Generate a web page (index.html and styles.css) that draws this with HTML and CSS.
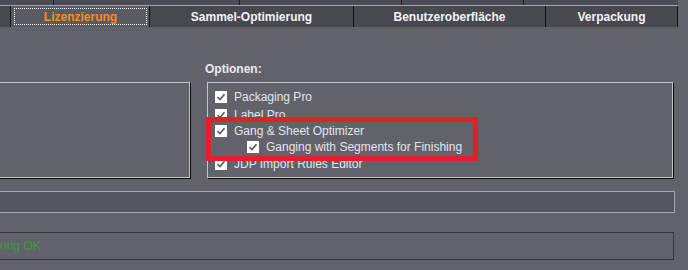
FILE: index.html
```html
<!DOCTYPE html>
<html lang="de">
<head>
    <meta charset="UTF-8">
    <title>Lizenzierung</title>
    <link rel="stylesheet" href="styles.css">
</head>
<body>
    <div class="top-strip">
        <span class="strip-cell" style="width: 54px"></span>
        <span class="strip-cell" style="width: 186px"></span>
        <span class="strip-cell" style="width: 162px"></span>
        <span class="strip-cell" style="width: 122px"></span>
    </div>
    <div class="tabs">
        <div class="tab tab-cut"></div>
        <div class="tab active"><span class="focus">Lizenzierung</span></div>
        <div class="tab tab-sammel">Sammel-Optimierung</div>
        <div class="tab tab-ui">Benutzeroberfläche</div>
        <div class="tab tab-pack">Verpackung</div>
    </div>

    <div class="content">
        <div class="columns">
            <div class="panel left-panel"></div>
            <div class="options">
                <div class="label">Optionen:</div>
                <div class="panel option-list">
                    <div class="row r1"><span class="check"><svg viewBox="0 0 12 12"><path d="M2.5 6.2 L5 8.6 L9.5 3.2"/></svg></span>Packaging Pro</div>
                    <div class="row r2"><span class="check"><svg viewBox="0 0 12 12"><path d="M2.5 6.2 L5 8.6 L9.5 3.2"/></svg></span>Label Pro</div>
                    <div class="row r3"><span class="check"><svg viewBox="0 0 12 12"><path d="M2.5 6.2 L5 8.6 L9.5 3.2"/></svg></span>Gang &amp; Sheet Optimizer</div>
                    <div class="row r4 sub"><span class="check"><svg viewBox="0 0 12 12"><path d="M2.5 6.2 L5 8.6 L9.5 3.2"/></svg></span>Ganging with Segments for Finishing</div>
                    <div class="row r5"><span class="check"><svg viewBox="0 0 12 12"><path d="M2.5 6.2 L5 8.6 L9.5 3.2"/></svg></span>JDP Import Rules Editor</div>
                    <div class="highlight"></div>
                </div>
            </div>
        </div>

        <div class="progress-bar"></div>
        <div class="status">Lizenzierung OK</div>
    </div>
</body>
</html>
```

FILE: styles.css
```css
body {
    margin: 0;
    width: 688px;
    height: 270px;
    overflow: hidden;
    background-color: #62626a;
    font-family: "Liberation Sans", Arial, sans-serif;
    font-size: 12px;
    color: #e4e4ec;
}

/* top row of the tab control, mostly hidden */
.top-strip {
    display: flex;
    height: 5px;
    width: 678px;
    background-color: #4c4c54;
}

.strip-cell {
    height: 5px;
    border-right: 1px solid #1c1c20;
    box-sizing: border-box;
}

.tabs {
    display: flex;
    height: 21px;
    border-top: 1px solid #a4a4ac;
    width: 678px;
    background-color: #48484f;
}

.tab {
    box-sizing: border-box;
    height: 21px;
    border-right: 1px solid #111114;
    display: flex;
    align-items: center;
    justify-content: center;
    font-weight: bold;
    color: #f2f2fa;
}

.tab-cut {
    width: 11px;
}

.tab.active {
    width: 139px;
    background-color: #5a5a62;
    color: #ff8c1a;
    padding: 2px 2px 2px 3px;
}

.tab.active .focus {
    flex: 1;
    align-self: stretch;
    display: flex;
    align-items: center;
    justify-content: center;
    border: 1px dotted #ffffff;
}

.tab-sammel {
    width: 204px;
}

.tab-ui {
    width: 192px;
}

.tab-pack {
    width: 132px;
}

.content {
    padding-top: 35px;
}

.columns {
    display: flex;
    align-items: flex-end;
    gap: 17px;
}

.panel {
    box-sizing: border-box;
    border: 1px solid #c4c4cc;
    box-shadow: 1px 1px 0 #0c0c0e;
}

.left-panel {
    margin-left: -10px;
    width: 200px;
    height: 96px;
}

.options {
    width: 466px;
}

.label {
    font-weight: bold;
    line-height: 14px;
    margin: 0 0 6px -2px;
    color: #eaeaf2;
}

.option-list {
    position: relative;
    height: 96px;
    padding: 5px 0 0 7px;
}

.row {
    display: flex;
    align-items: center;
    gap: 7px;
    height: 17px;
    white-space: nowrap;
}

.r2 {
    padding-top: 1px;
}

.r3,
.r4 {
    height: 16px;
}

.sub {
    padding-left: 32px;
}

.check {
    width: 12px;
    height: 12px;
    flex: none;
    background-color: #ffffff;
}

.check svg {
    display: block;
    width: 12px;
    height: 12px;
}

.check path {
    fill: none;
    stroke: #5c5c62;
    stroke-width: 1.7;
}

/* red annotation frame */
.highlight {
    position: absolute;
    left: -2px;
    top: 34px;
    width: 272px;
    height: 44px;
    box-sizing: border-box;
    border: 5px solid #e61e28;
}

.progress-bar {
    box-sizing: border-box;
    margin: 13px 0 0 -10px;
    width: 685px;
    height: 22px;
    border: 1px solid #a8a8b0;
    background-color: #55555d;
}

.status {
    box-sizing: border-box;
    margin: 19px 0 0 -55px;
    width: 729px;
    height: 28px;
    border: 1px solid #36363c;
    padding-left: 6px;
    display: flex;
    align-items: center;
    color: #3c9c3c;
}
```
